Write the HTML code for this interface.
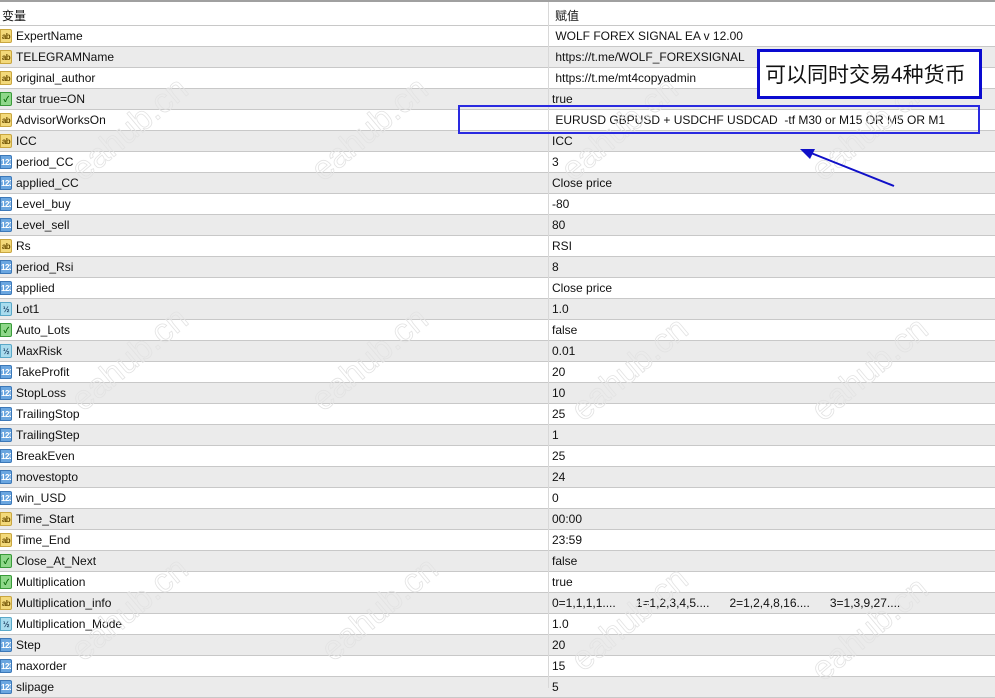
<!DOCTYPE html>
<html><head><meta charset="utf-8"><style>
*{margin:0;padding:0;box-sizing:border-box}
body{width:995px;height:688px;overflow:hidden;background:#fff;font-family:"Liberation Sans","Noto Sans CJK SC",sans-serif;font-size:12px;color:#111;position:relative}
.top{position:absolute;left:0;top:0;width:995px;height:2px;background:#a0a0a0}
.hdr{position:absolute;top:2px;height:24px;width:995px;border-bottom:1px solid #c8c8c8}
.hdr span{position:absolute;top:5px}
.row{position:absolute;left:0;width:995px;height:21px;border-bottom:1px solid #c8c8c8;background:#fff}
.row.g{background:#ebebeb}
.row .n{position:absolute;left:16px;top:3px;white-space:pre}
.row .v{position:absolute;left:552px;top:3px;white-space:pre}
.ic{position:absolute;left:0;top:3px;width:12px;height:14px;border-radius:0 2px 2px 0;font-size:8px;line-height:13px;text-align:center;font-weight:bold;letter-spacing:-0.5px;overflow:hidden}
.ab{background:#f3d97a;border:1px solid #c9a640;color:#6a4d00}
.nm{background:#6aa6e0;border:1px solid #3c78b8;color:#fff}
.dv{background:#a9dcee;border:1px solid #5aa8c8;color:#246}
.bl{background:#8fd88a;border:1px solid #3a9a3a;color:#060}
.vline{position:absolute;left:548px;top:2px;width:1px;height:686px;background:#d8d8d8}
.wm{position:absolute;font-size:34px;color:transparent;-webkit-text-stroke:0.8px #e3e3e3;transform:rotate(-40deg);font-family:"Liberation Sans",sans-serif;white-space:nowrap}
</style></head><body>
<div class="top"></div>
<div class="hdr"><span style="left:2px">变量</span><span style="left:555px">赋值</span></div>

<div class="row" style="top:26px"><div class="ic ab">ab</div><span class="n">ExpertName</span><span class="v"> WOLF FOREX SIGNAL EA v 12.00</span></div>
<div class="row g" style="top:47px"><div class="ic ab">ab</div><span class="n">TELEGRAMName</span><span class="v"> https://t.me/WOLF_FOREXSIGNAL</span></div>
<div class="row" style="top:68px"><div class="ic ab">ab</div><span class="n">original_author</span><span class="v"> https://t.me/mt4copyadmin</span></div>
<div class="row g" style="top:89px"><div class="ic bl">✓</div><span class="n">star true=ON</span><span class="v">true</span></div>
<div class="row" style="top:110px"><div class="ic ab">ab</div><span class="n">AdvisorWorksOn</span><span class="v"> EURUSD GBPUSD + USDCHF USDCAD  -tf M30 or M15 OR M5 OR M1</span></div>
<div class="row g" style="top:131px"><div class="ic ab">ab</div><span class="n">ICC</span><span class="v">ICC</span></div>
<div class="row" style="top:152px"><div class="ic nm">123</div><span class="n">period_CC</span><span class="v">3</span></div>
<div class="row g" style="top:173px"><div class="ic nm">123</div><span class="n">applied_CC</span><span class="v">Close price</span></div>
<div class="row" style="top:194px"><div class="ic nm">123</div><span class="n">Level_buy</span><span class="v">-80</span></div>
<div class="row g" style="top:215px"><div class="ic nm">123</div><span class="n">Level_sell</span><span class="v">80</span></div>
<div class="row" style="top:236px"><div class="ic ab">ab</div><span class="n">Rs</span><span class="v">RSI</span></div>
<div class="row g" style="top:257px"><div class="ic nm">123</div><span class="n">period_Rsi</span><span class="v">8</span></div>
<div class="row" style="top:278px"><div class="ic nm">123</div><span class="n">applied</span><span class="v">Close price</span></div>
<div class="row g" style="top:299px"><div class="ic dv">½</div><span class="n">Lot1</span><span class="v">1.0</span></div>
<div class="row" style="top:320px"><div class="ic bl">✓</div><span class="n">Auto_Lots</span><span class="v">false</span></div>
<div class="row g" style="top:341px"><div class="ic dv">½</div><span class="n">MaxRisk</span><span class="v">0.01</span></div>
<div class="row" style="top:362px"><div class="ic nm">123</div><span class="n">TakeProfit</span><span class="v">20</span></div>
<div class="row g" style="top:383px"><div class="ic nm">123</div><span class="n">StopLoss</span><span class="v">10</span></div>
<div class="row" style="top:404px"><div class="ic nm">123</div><span class="n">TrailingStop</span><span class="v">25</span></div>
<div class="row g" style="top:425px"><div class="ic nm">123</div><span class="n">TrailingStep</span><span class="v">1</span></div>
<div class="row" style="top:446px"><div class="ic nm">123</div><span class="n">BreakEven</span><span class="v">25</span></div>
<div class="row g" style="top:467px"><div class="ic nm">123</div><span class="n">movestopto</span><span class="v">24</span></div>
<div class="row" style="top:488px"><div class="ic nm">123</div><span class="n">win_USD</span><span class="v">0</span></div>
<div class="row g" style="top:509px"><div class="ic ab">ab</div><span class="n">Time_Start</span><span class="v">00:00</span></div>
<div class="row" style="top:530px"><div class="ic ab">ab</div><span class="n">Time_End</span><span class="v">23:59</span></div>
<div class="row g" style="top:551px"><div class="ic bl">✓</div><span class="n">Close_At_Next</span><span class="v">false</span></div>
<div class="row" style="top:572px"><div class="ic bl">✓</div><span class="n">Multiplication</span><span class="v">true</span></div>
<div class="row g" style="top:593px"><div class="ic ab">ab</div><span class="n">Multiplication_info</span><span class="v">0=1,1,1,1....      1=1,2,3,4,5....      2=1,2,4,8,16....      3=1,3,9,27....</span></div>
<div class="row" style="top:614px"><div class="ic dv">½</div><span class="n">Multiplication_Mode</span><span class="v">1.0</span></div>
<div class="row g" style="top:635px"><div class="ic nm">123</div><span class="n">Step</span><span class="v">20</span></div>
<div class="row" style="top:656px"><div class="ic nm">123</div><span class="n">maxorder</span><span class="v">15</span></div>
<div class="row g" style="top:677px"><div class="ic nm">123</div><span class="n">slipage</span><span class="v">5</span></div>

<div class="vline"></div>

<div class="wm" style="left:60px;top:110px">eahub.cn</div>
<div class="wm" style="left:300px;top:110px">eahub.cn</div>
<div class="wm" style="left:550px;top:110px">eahub.cn</div>
<div class="wm" style="left:800px;top:110px">eahub.cn</div>
<div class="wm" style="left:60px;top:340px">eahub.cn</div>
<div class="wm" style="left:300px;top:340px">eahub.cn</div>
<div class="wm" style="left:560px;top:350px">eahub.cn</div>
<div class="wm" style="left:800px;top:350px">eahub.cn</div>
<div class="wm" style="left:60px;top:590px">eahub.cn</div>
<div class="wm" style="left:310px;top:590px">eahub.cn</div>
<div class="wm" style="left:560px;top:600px">eahub.cn</div>
<div class="wm" style="left:800px;top:610px">eahub.cn</div>

<div style="position:absolute;left:757px;top:49px;width:225px;height:50px;border:3px solid #0a0ad0;background:#fff"></div>
<div style="position:absolute;left:765px;top:59px;font-size:21px;font-family:'Liberation Sans','Noto Sans CJK SC',sans-serif;color:#111">可以同时交易4种货币</div>
<div style="position:absolute;left:458px;top:105px;width:522px;height:29px;border:2px solid #2a2ae0"></div>
<svg style="position:absolute;left:0;top:0" width="995" height="688"><line x1="894" y1="186" x2="806" y2="151" stroke="#1010c8" stroke-width="2"/><polygon points="800,149 815,149 810,159" fill="#1010c8"/></svg>
</body></html>
